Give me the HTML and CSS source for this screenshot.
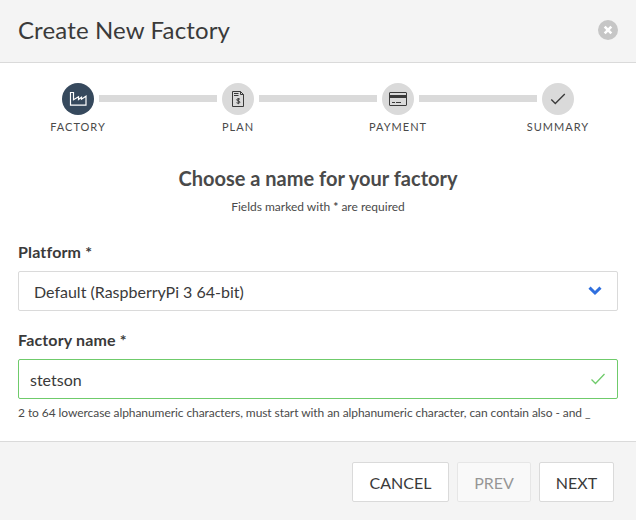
FILE: index.html
```html
<!DOCTYPE html>
<html lang="en">
<head>
<meta charset="utf-8">
<title>Create New Factory</title>
<link rel="stylesheet" href="styles.css">
</head>
<body>
<div class="dialog">
  <header class="header">
    <h1 class="title">Create New Factory</h1>
    <button class="close" aria-label="Close">
      <svg width="20" height="20" viewBox="0 0 20 20"><circle cx="10" cy="10" r="10" fill="#c6c6c6"/><path d="M6.7 6.7l6.6 6.6M13.3 6.7l-6.6 6.6" stroke="#fff" stroke-width="2.6"/></svg>
    </button>
  </header>
  <main class="content">
    <ol class="steps">
      <li class="step">
        <span class="dot active"><svg width="32" height="32" viewBox="0 0 32 32"><path d="M8.500 9.500h3v7.200l5-3v2.800l3-2.300v2l4.500-3v9h-15.500z"/></svg></span>
        <span class="step-label">FACTORY</span>
      </li>
      <li class="step">
        <span class="dot"><svg width="32" height="32" viewBox="0 0 32 32"><path d="M10.500 8.500h8l3 3v12h-11zM18.500 8.500v3h3M12 10.500h4.500M12 12.500h4.500"/><path d="M18 16.200c-1-.6-3.300-.6-3.300.7 0 1.300 3.300.8 3.300 2.200 0 1.300-2.400 1.300-3.500.6M16.300 15v6.200"/></svg></span>
        <span class="step-label">PLAN</span>
      </li>
      <li class="step">
        <span class="dot"><svg width="32" height="32" viewBox="0 0 32 32"><rect x="7.500" y="9.500" width="17" height="13" rx=".5"/><path d="M7.500 13.500h17" stroke-width="3"/><path d="M10 19.500h3M14 19.500h5"/></svg></span>
        <span class="step-label">PAYMENT</span>
      </li>
      <li class="step">
        <span class="dot"><svg width="32" height="32" viewBox="0 0 32 32"><path d="M9.300 16.500l4 4 9.500-9.500" stroke-width="1.300"/></svg></span>
        <span class="step-label">SUMMARY</span>
      </li>
    </ol>
    <h2 class="heading">Choose a name for your factory</h2>
    <p class="note">Fields marked with <b>*</b> are required</p>
    <div class="field">
      <div class="label">Platform *</div>
      <div class="control select"><span>Default (RaspberryPi 3 64-bit)</span>
        <svg width="14" height="10" viewBox="0 0 14 10"><path d="M1.500 1.700l5.500 5.300 5.500-5.300" fill="none" stroke="#2f6fde" stroke-width="3"/></svg>
      </div>
    </div>
    <div class="field">
      <div class="label">Factory name *</div>
      <div class="control valid"><span>stetson</span>
        <svg width="14" height="12" viewBox="0 0 14 12"><path d="M.5 6.500l4 4 9-9.500" fill="none" stroke="#6fcb6b" stroke-width="1.300"/></svg>
      </div>
      <p class="hint">2 to 64 lowercase alphanumeric characters, must start with an alphanumeric character, can contain also - and _</p>
    </div>
  </main>
  <footer class="footer">
    <button class="btn cancel">CANCEL</button>
    <button class="btn prev" disabled>PREV</button>
    <button class="btn next">NEXT</button>
  </footer>
</div>
</body>
</html>
```
FILE: styles.css
```css
* { box-sizing: border-box; }
body, h1, h2, p, ol { margin: 0; padding: 0; }
body { font-family: Lato, sans-serif; font-size: 16px; color: #3a3a3a; background: #fff; overflow: hidden; }
.dialog { width: 636px; height: 520px; display: flex; flex-direction: column; }
.header { height: 63px; flex: none; padding: 0 18px; display: flex; align-items: center; justify-content: space-between; background: #f4f4f4; border-bottom: 1px solid #dadada; }
.title { margin-top: -2px; font-size: 24px; font-weight: 400; line-height: 30px; letter-spacing: .14px; }
.close { width: 20px; height: 20px; padding: 0; border: 0; background: none; margin-top: -2px; }
.close svg { display: block; }
.content { flex: 1; padding: 20px 18px 0; }
.steps { list-style: none; display: grid; grid-template-columns: repeat(4, 160px); margin: 0 -20px; }
.step { position: relative; display: flex; flex-direction: column; align-items: center; }
.step + .step::before { content: ""; position: absolute; left: -59px; top: 12px; width: 118px; height: 7px; background: #dadada; }
.dot { width: 32px; height: 32px; border-radius: 50%; background: #dadada; }
.dot svg { display: block; fill: none; stroke: #3a3a3a; stroke-width: 1; }
.dot.active { background: #36495d; }
.dot.active svg { stroke: #fff; stroke-width: 1.200; }
.step-label { margin-top: 4px; font-size: 11px; line-height: 16px; letter-spacing: 1px; color: #4a4a4a; }
.heading { margin-top: 30px; font-size: 20px; line-height: 26px; font-weight: 700; text-align: center; color: #4a4a4a; }
.note { margin-top: 8px; font-size: 12px; line-height: 16px; text-align: center; color: #4a4a4a; }
.field { margin-top: 27px; }
.field + .field { margin-top: 19px; }
.label { font-weight: 700; line-height: 20px; margin-bottom: 9px; letter-spacing: .16px; }
.control { height: 40px; display: flex; align-items: center; justify-content: space-between; border: 1px solid #dadada; border-radius: 2px; padding: 0 12px 0 11px; }
.select { padding: 0 15px; }
.valid { border-color: #6fcb6b; }
.hint { margin-top: 6px; font-size: 12px; line-height: 16px; letter-spacing: -.072px; white-space: nowrap; color: #4a4a4a; }
.footer { height: 79px; flex: none; display: flex; gap: 8px; justify-content: flex-end; padding: 20px 22px 0 0; background: #f4f4f4; border-top: 1px solid #dadada; }
.btn { height: 40px; padding: 0; font: 400 16px Lato, sans-serif; color: #3a3a3a; background: #fff; border: 1px solid #dadada; border-radius: 2px; }
.cancel { width: 97px; }
.prev { width: 74px; opacity: .5; }
.next { width: 75px; }
```
